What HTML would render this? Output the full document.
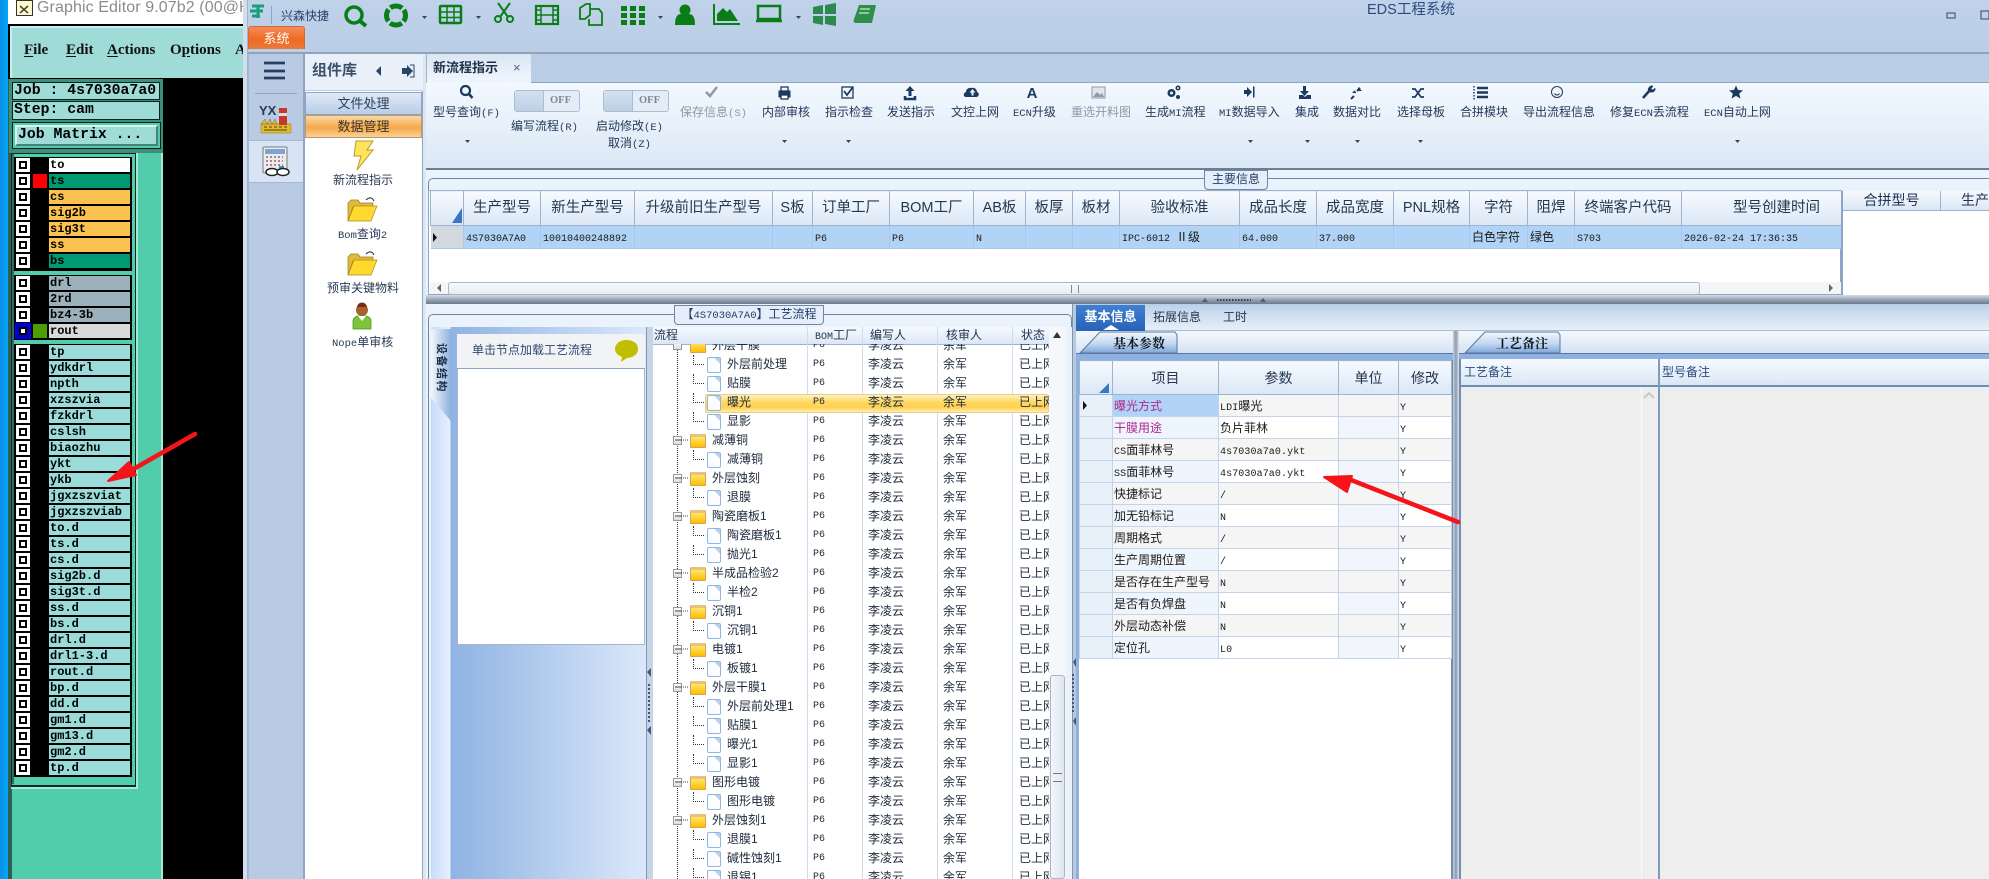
<!DOCTYPE html>
<html><head><meta charset="utf-8"><title>EDS</title>
<style>
html,body{margin:0;padding:0;width:1989px;height:879px;overflow:hidden;background:#bccfe6}
body{position:relative;font:12px/16px "Liberation Sans","Noto Sans CJK SC",sans-serif;color:#1f3350}
div,span.l,svg.o{position:absolute}
i{font:normal 10.5px/1 "Liberation Mono",monospace}
.l{position:absolute;white-space:nowrap;line-height:16px;color:#25395a}
.g{color:#8d99a8}
/* left app */
.lay{position:absolute;left:14px;width:118px;background:#000}
.lay p{margin:0;height:16px;position:relative}
.lay p s{position:absolute;left:2px;top:1px;width:14px;height:14px;background:#fff;text-decoration:none}
.lay p s:after{content:"";position:absolute;left:3px;top:3px;width:4px;height:4px;border:2px solid #000;background:#fff}
.lay p b{position:absolute;left:35px;top:1px;width:81px;height:14px;background:#9bdcdb;color:#000;font:bold 12px/14px "Liberation Mono",monospace;padding-left:1px;box-sizing:border-box;white-space:nowrap;overflow:hidden}
.lay p b.o{background:#fcc24f}.lay p b.v{background:#009a72}.lay p b.y{background:#9cb1bb}.lay p b.w{background:#fff}
.mono{font:bold 14.8px/18px "Liberation Mono",monospace;color:#000;white-space:nowrap}
.mn{position:absolute;top:41px;font:bold 15px/18px "Liberation Serif",serif;color:#111}
.mn u{text-underline-offset:2px}
/* tables */
table{position:absolute;border-collapse:collapse;table-layout:fixed}
td,th{padding:0;overflow:hidden;white-space:nowrap}
.t1 th{height:34px;font:normal 14.5px/16px "Liberation Sans","Noto Sans CJK SC",sans-serif;color:#24364f;background:linear-gradient(#f6faff,#dbe7f5);border:1px solid #9db4d0;text-align:center}
.t1 td{height:22px;background:#b0d3f6;border-right:1px solid #a7c8ea;border-bottom:1px solid #a7c8ea;padding-left:2px;font-size:12px;color:#1a1a1a}
.t2 th{height:33px;font:normal 14px/16px "Liberation Sans","Noto Sans CJK SC",sans-serif;color:#24364f;background:linear-gradient(#f6faff,#dbe7f5);border:1px solid #9db4d0}
.t2 td{height:21px;border:1px solid #c3d4e9;padding-left:1px;font-size:12px;color:#1a1a1a;background:#fff}
.t2 tr:nth-child(even) td{background:#f5f5f5}
.t2 td:first-child{background:#e8f0fa!important}
.t2 td:nth-child(2){background:#eff5fc}
.t2 tr:nth-child(even) td:nth-child(2){background:#f5f5f5}
.t2 td:nth-child(4){background:#f2f6fc}
.t2 td i{font-size:10px;letter-spacing:.1px}
/* tree */
.t{position:absolute;left:653px;top:344px;width:396px;height:535px;overflow:hidden;font-size:12px;color:#1d2a3c}
.in{position:absolute;left:0;top:-8px;width:396px}
.t p{position:relative;height:19px;margin:0;white-space:nowrap}
.t p span{position:absolute;top:0;line-height:19px;left:74px}
.t p.f span:nth-child(1){left:59px}
.t p span:nth-child(2){left:160px;font:10px/19px "Liberation Mono",monospace}
.t p span:nth-child(3){left:215px}
.t p span:nth-child(4){left:290px}
.t p span:nth-child(5){left:366px;width:30px;overflow:hidden}
.t p:before{content:"";position:absolute;left:54px;top:2px;width:12px;height:14px;border:1px solid #8fb6e0;border-radius:2px;background:linear-gradient(225deg,#b9d2ee 4px,#fff 4px,#f6faff)}
.t p:after{content:"";position:absolute;left:40px;top:0;width:10px;height:9px;border-left:1px dotted #333;border-bottom:1px dotted #333}
.t p.f:before{left:37px;top:3px;width:14px;height:10px;border:1px solid #d3a35a;border-top:3px solid #e9c27c;border-radius:1px;background:linear-gradient(#ffe66a,#ffbd00)}
.t p.f:after{left:20px;top:5px;width:7px;height:7px;border:1px solid #999;background:linear-gradient(#fff,#ddd),#fff;box-shadow:inset 0 0 0 0 #000}
.h{font-size:12px;color:#24364f;white-space:nowrap;line-height:17px}
</style></head><body>

<!-- desktop and left app -->
<div style="left:0;top:0;width:8px;height:879px;background:linear-gradient(90deg,#0a8fe6,#05a8f7)"></div>
<div style="left:8px;top:0;width:236px;height:24px;background:#fff"></div>
<div style="left:37px;top:-1px;font:16px/18px 'Liberation Sans',sans-serif;color:#8b8b8b;white-space:nowrap;width:206px;overflow:hidden;letter-spacing:.1px">Graphic Editor 9.07b2 (00@H</div>
<div style="left:16px;top:0;width:15px;height:14px;background:#fff8c8;border:1px solid #333"></div>
<div style="left:8px;top:24px;width:236px;height:855px;background:#000"></div>
<div style="left:10px;top:26px;width:234px;height:52px;background:#9fdcd8;border-top:2px solid #c8f0ec;border-left:2px solid #c8f0ec;box-sizing:border-box"></div>
<span class="mn" style="left:24px"><u>F</u>ile</span>
<span class="mn" style="left:66px"><u>E</u>dit</span>
<span class="mn" style="left:107px"><u>A</u>ctions</span>
<span class="mn" style="left:170px">O<u>p</u>tions</span>
<span class="mn" style="left:235px;width:8px;overflow:hidden">A</span>

<div style="left:8px;top:79px;width:155px;height:800px;background:#52cdac"></div>
<div style="left:8px;top:79px;width:4px;height:800px;background:#2f5f55"></div>
<div style="left:9px;top:79px;width:154px;height:74px;background:#3d8f7c"></div>
<div style="left:12px;top:82px;width:148px;height:18px;background:#9fdcd8;border:1px solid #07231d;box-sizing:border-box"></div>
<div style="left:12px;top:101px;width:148px;height:19px;background:#9fdcd8;border:1px solid #07231d;box-sizing:border-box"></div>
<div class="mono" style="left:14px;top:82px">Job : 4s7030a7a0</div>
<div class="mono" style="left:14px;top:101px">Step: cam</div>
<div style="left:12px;top:122px;width:149px;height:27px;background:#52cdac;border:1px solid #07231d;box-sizing:border-box"></div>
<div style="left:15px;top:125px;width:143px;height:21px;background:#9fdcd8;border-top:2px solid #d6f4f2;border-left:2px solid #d6f4f2;border-right:2px solid #4a807c;border-bottom:2px solid #4a807c;box-sizing:border-box"></div>
<div class="mono" style="left:18px;top:126px">Job Matrix ...</div>

<div style="left:11px;top:153px;width:125px;height:634px;background:#52cdac;border:1px solid #0d2a24;border-bottom:2px solid #0d2a24;box-sizing:border-box"></div>
<div style="left:11px;top:787px;width:126px;height:2px;background:#a5ead7"></div>
<div style="left:136px;top:153px;width:2px;height:636px;background:#a5ead7"></div>
<div style="left:161px;top:153px;width:2px;height:726px;background:#a5ead7"></div>
<div style="left:12px;top:154px;width:2px;height:630px;background:#2f6e5c"></div>

<div class="lay" style="top:157px;height:114px">
<p><s></s><b class="w">to</b></p>
<p><s></s><span style="position:absolute;left:19px;top:1px;width:14px;height:14px;background:#f00"></span><b class="v">ts</b></p>
<p><s></s><b class="o">cs</b></p><p><s></s><b class="o">sig2b</b></p><p><s></s><b class="o">sig3t</b></p><p><s></s><b class="o">ss</b></p><p><s></s><b class="v">bs</b></p>
</div>
<div class="lay" style="top:275px;height:65px">
<p><s></s><b class="y">drl</b></p><p><s></s><b class="y">2rd</b></p><p><s></s><b class="y">bz4-3b</b></p>
<p><s style="box-shadow:0 0 0 1px #00f;background:#00c"></s><span style="position:absolute;left:19px;top:1px;width:14px;height:14px;background:#4aa000"></span><b style="background:#d9d9d9">rout</b></p>
</div>
<div class="lay" style="top:344px;height:433px">
<p><s></s><b>tp</b></p><p><s></s><b>ydkdrl</b></p><p><s></s><b>npth</b></p><p><s></s><b>xzszvia</b></p><p><s></s><b>fzkdrl</b></p><p><s></s><b>cslsh</b></p><p><s></s><b>biaozhu</b></p><p><s></s><b>ykt</b></p><p><s></s><b>ykb</b></p><p><s></s><b>jgxzszviat</b></p><p><s></s><b>jgxzszviab</b></p><p><s></s><b>to.d</b></p><p><s></s><b>ts.d</b></p><p><s></s><b>cs.d</b></p><p><s></s><b>sig2b.d</b></p><p><s></s><b>sig3t.d</b></p><p><s></s><b>ss.d</b></p><p><s></s><b>bs.d</b></p><p><s></s><b>drl.d</b></p><p><s></s><b>drl1-3.d</b></p><p><s></s><b>rout.d</b></p><p><s></s><b>bp.d</b></p><p><s></s><b>dd.d</b></p><p><s></s><b>gm1.d</b></p><p><s></s><b>gm13.d</b></p><p><s></s><b>gm2.d</b></p><p><s></s><b>tp.d</b></p>
</div>

<!-- EDS window -->
<div style="left:243px;top:0;width:1746px;height:879px;background:linear-gradient(#bfd2ea,#b9cde5 60px)"></div>
<div style="left:243px;top:0;width:5px;height:879px;background:#d3deec;border-right:1px solid #9fb4cf;box-sizing:border-box"></div>
<span class="l" style="left:281px;top:8px;color:#24406a">兴森快捷</span>
<div style="left:271px;top:6px;width:1px;height:18px;background:#8ea6c4"></div>
<div style="left:1367px;top:2px;font-size:14.5px;line-height:16px;color:#2c4a7c;white-space:nowrap">EDS工程系统</div>
<div style="left:248px;top:26px;width:57px;height:23px;background:linear-gradient(#f58c5a,#f06a22 55%,#e87a3a);border:1px solid #d0683c;border-bottom:0;border-radius:3px 3px 0 0;box-sizing:border-box;color:#fff;font-size:13px;line-height:23px;text-align:center">系统</div>
<div style="left:248px;top:52px;width:1741px;height:2px;background:#8fa3bd"></div>

<!-- sidebar -->
<div style="left:248px;top:54px;width:55px;height:825px;background:#b8cbe3;border-left:1px solid #a4b9d4;box-sizing:border-box"></div>
<div style="left:255px;top:93px;width:42px;height:1px;background:#8ea6c4"></div>
<div style="left:249px;top:140px;width:54px;height:43px;background:#d8e4f3;border-top:1px solid #a4b9d4;border-bottom:1px solid #a4b9d4;box-sizing:border-box"></div>
<div style="left:303px;top:54px;width:2px;height:825px;background:#8ea6c4"></div>
<div style="left:305px;top:54px;width:121px;height:36px;background:#e9f0f9"></div>
<div style="left:312px;top:62px;font:bold 15px/18px 'Liberation Sans','Noto Sans CJK SC',sans-serif;color:#3b4f6b;white-space:nowrap">组件库</div>
<div style="left:305px;top:91px;width:117px;height:788px;background:#fff;border-right:1px solid #8ea6c4;box-sizing:content-box"></div>
<div style="left:305px;top:92px;width:117px;height:23px;background:linear-gradient(#dfe9f6,#b9cde6);border:1px solid #8ea6c4;box-sizing:border-box;text-align:center;line-height:21px;font-size:13px;color:#2c3f5c">文件处理</div>
<div style="left:305px;top:115px;width:117px;height:23px;background:linear-gradient(#fbd9a4,#f6a84a 55%,#fcd095);border:1px solid #b79a70;box-sizing:border-box;text-align:center;line-height:21px;font-size:13px;color:#3a3324">数据管理</div>
<span class="l" style="left:333px;top:172px;color:#2a3b55">新流程指示</span>
<span class="l" style="left:338px;top:226px;color:#2a3b55"><i>Bom</i>查询<i>2</i></span>
<span class="l" style="left:327px;top:280px;color:#2a3b55">预审关键物料</span>
<span class="l" style="left:332px;top:334px;color:#2a3b55"><i>Nope</i>单审核</span>
<div style="left:423px;top:54px;width:3px;height:825px;background:#dde7f4"></div>

<!-- tab row -->
<div style="left:426px;top:54px;width:1563px;height:28px;background:#b9cde5;border-bottom:1px solid #8ea6c4;box-sizing:content-box"></div>
<div style="left:426px;top:54px;width:105px;height:29px;background:linear-gradient(#dbe6f4,#f0f6fd);border-left:1px solid #9fb4cf;box-sizing:border-box"></div>
<div style="left:433px;top:60px;font:bold 13px/16px 'Liberation Sans','Noto Sans CJK SC',sans-serif;color:#21324a;white-space:nowrap">新流程指示</div>
<div style="left:513px;top:60px;font-size:13px;line-height:16px;color:#54657c">×</div>

<!-- ribbon -->
<div style="left:426px;top:83px;width:1563px;height:85px;background:linear-gradient(#f2f8fe,#dce8f6);border-bottom:2px solid #6f7f93;box-sizing:content-box"></div>
<span class="l" style="left:433px;top:104px">型号查询<i>(F)</i></span>
<div style="left:514px;top:90px;width:66px;height:22px;background:#e4ecf6;border:1px solid #a8bdd6;border-radius:3px;box-sizing:border-box"><div style="left:0;top:0;width:28px;height:20px;background:linear-gradient(#d3e0ef,#bfd0e4);border-right:1px solid #a8bdd6"></div><div style="left:35px;top:2px;font:bold 10.5px/16px 'Liberation Serif',serif;color:#7d8893">OFF</div></div>
<span class="l" style="left:511px;top:118px">编写流程<i>(R)</i></span>
<div style="left:603px;top:90px;width:66px;height:22px;background:#e4ecf6;border:1px solid #a8bdd6;border-radius:3px;box-sizing:border-box"><div style="left:0;top:0;width:28px;height:20px;background:linear-gradient(#d3e0ef,#bfd0e4);border-right:1px solid #a8bdd6"></div><div style="left:35px;top:2px;font:bold 10.5px/16px 'Liberation Serif',serif;color:#7d8893">OFF</div></div>
<span class="l" style="left:596px;top:118px">启动修改<i>(E)</i></span>
<span class="l" style="left:608px;top:135px">取消<i>(Z)</i></span>
<span class="l g" style="left:680px;top:104px">保存信息<i>(S)</i></span>
<span class="l" style="left:762px;top:104px">内部审核</span>
<span class="l" style="left:825px;top:104px">指示检查</span>
<span class="l" style="left:887px;top:104px">发送指示</span>
<span class="l" style="left:951px;top:104px">文控上网</span>
<span class="l" style="left:1013px;top:104px"><i>ECN</i>升级</span>
<span class="l g" style="left:1071px;top:104px">重选开料图</span>
<span class="l" style="left:1145px;top:104px">生成<i>MI</i>流程</span>
<span class="l" style="left:1219px;top:104px"><i>MI</i>数据导入</span>
<span class="l" style="left:1295px;top:104px">集成</span>
<span class="l" style="left:1333px;top:104px">数据对比</span>
<span class="l" style="left:1397px;top:104px">选择母板</span>
<span class="l" style="left:1460px;top:104px">合拼模块</span>
<span class="l" style="left:1523px;top:104px">导出流程信息</span>
<span class="l" style="left:1610px;top:104px">修复<i>ECN</i>丢流程</span>
<span class="l" style="left:1704px;top:104px"><i>ECN</i>自动上网</span>

<!-- main info -->
<div style="left:426px;top:170px;width:1563px;height:134px;background:#eaf2fb"></div>
<div style="left:428px;top:178px;width:1561px;height:20px;border-top:1px solid #6f86a5;border-left:1px solid #6f86a5;border-radius:5px 0 0 0;box-sizing:border-box"></div>
<div style="left:428px;top:190px;width:1413px;height:105px;background:#fff;border:1px solid #8ea6c4;box-sizing:border-box"></div>
<div style="left:1204px;top:170px;width:64px;height:20px;background:#e5eef9;border:1px solid #6f86a5;border-radius:0 0 4px 4px;box-sizing:border-box;text-align:center;font-size:12px;line-height:17px;color:#24406a">主要信息</div>
<table class="t1" style="left:430px;top:190px;width:1411px">
<colgroup><col style="width:33px"><col style="width:77px"><col style="width:94px"><col style="width:138px"><col style="width:40px"><col style="width:77px"><col style="width:84px"><col style="width:52px"><col style="width:47px"><col style="width:47px"><col style="width:120px"><col style="width:77px"><col style="width:77px"><col style="width:76px"><col style="width:58px"><col style="width:47px"><col style="width:107px"><col style="width:160px"></colgroup>
<tr><th></th><th>生产型号</th><th>新生产型号</th><th>升级前旧生产型号</th><th>S板</th><th>订单工厂</th><th>BOM工厂</th><th>AB板</th><th>板厚</th><th>板材</th><th>验收标准</th><th>成品长度</th><th>成品宽度</th><th>PNL规格</th><th>字符</th><th>阻焊</th><th>终端客户代码</th><th style="padding-left:30px">型号创建时间</th></tr>
<tr><td style="background:#d3d8de"></td><td><i style="font-size:10px">4S7030A7A0</i></td><td><i style="font-size:10px">10010400248892</i></td><td></td><td></td><td><i style="font-size:10px">P6</i></td><td><i style="font-size:10px">P6</i></td><td><i style="font-size:10px">N</i></td><td></td><td></td><td><i style="font-size:10px">IPC-6012 </i>Ⅱ级</td><td><i style="font-size:10px">64.000</i></td><td><i style="font-size:10px">37.000</i></td><td></td><td>白色字符</td><td>绿色</td><td><i style="font-size:10px">S703</i></td><td><i style="font-size:10px">2026-02-24 17:36:35</i></td></tr>
</table>
<div style="left:430px;top:282px;width:1411px;height:12px;background:#f3f5f8"></div>
<div style="left:448px;top:282px;width:1252px;height:13px;background:linear-gradient(#f8fafc,#e8edf3);border:1px solid #aab6c4;border-radius:3px;box-sizing:border-box"></div>
<div style="left:1071px;top:285px;width:6px;height:8px;border-left:1px solid #888;border-right:1px solid #888"></div>
<div style="left:1841px;top:191px;width:148px;height:104px;background:#fff;border-left:2px solid #8ea6c4;box-sizing:border-box"></div>
<div style="left:1843px;top:191px;width:98px;height:20px;background:linear-gradient(#f6faff,#dbe7f5);border-right:1px solid #9db4d0;border-bottom:1px solid #9db4d0;box-sizing:border-box;text-align:center;font-size:14px;line-height:19px;white-space:nowrap">合拼型号</div>
<div style="left:1941px;top:191px;width:48px;height:20px;background:linear-gradient(#f6faff,#dbe7f5);border-bottom:1px solid #9db4d0;box-sizing:border-box;font-size:14px;line-height:19px;padding-left:20px;white-space:nowrap;overflow:hidden">生产</div>
<div style="left:426px;top:295px;width:1563px;height:9px;background:linear-gradient(#d5dde7,#8e9cae 60%,#6d7b8e)"></div>

<!-- lower left -->
<div style="left:426px;top:304px;width:647px;height:575px;background:#eaf2fb"></div>
<div style="left:428px;top:314px;width:644px;height:565px;border-top:1px solid #6f86a5;border-left:1px solid #6f86a5;border-right:1px solid #6f86a5;border-radius:5px 5px 0 0;box-sizing:border-box"></div>
<div style="left:674px;top:305px;width:150px;height:20px;background:#e5eef9;border:1px solid #6f86a5;border-radius:0 0 4px 4px;box-sizing:border-box;text-align:center;font-size:12px;line-height:17px;color:#24406a;white-space:nowrap">【<i>4S7030A7A0</i>】工艺流程</div>
<div style="left:431px;top:327px;width:215px;height:552px;background:linear-gradient(90deg,#c8dcf8,#e6f0fd 19px,#8fb3e3 20px,#dbe8fa)"></div>
<div style="left:431px;top:329px;width:20px;height:92px;background:linear-gradient(90deg,#f3f7fd,#8fb1df);clip-path:polygon(0 0,100% 0,100% 100%,0 75%)"></div>
<div style="left:433px;top:343px;writing-mode:vertical-rl;text-orientation:sideways;font:bold 11px/16px 'Liberation Sans','Noto Sans CJK SC',sans-serif;letter-spacing:1.500px;color:#20304a;white-space:nowrap">设备结构</div>
<div style="left:457px;top:343px;width:188px;height:302px;background:#fff;border:1px solid #a5b6cc;border-top:0;box-sizing:border-box"></div>
<div style="left:457px;top:334px;width:188px;height:35px;background:#f2f3f5;border-bottom:1px solid #8ea6c4;box-sizing:border-box"></div>
<span class="l" style="left:472px;top:342px;color:#2d4770">单击节点加载工艺流程</span>
<div style="left:646px;top:327px;width:7px;height:552px;background:#c6d4e6;border-left:1px solid #7f97b5;box-sizing:border-box"></div>

<!-- tree -->
<div style="left:653px;top:327px;width:413px;height:552px;background:#fff"></div>
<div style="left:653px;top:327px;width:413px;height:18px;background:linear-gradient(#f6faff,#dbe7f5);border-bottom:1px solid #9db4d0;box-sizing:border-box"></div>
<div class="h" style="left:654px;top:327px">流程</div>
<div class="h" style="left:815px;top:327px"><i style="font-size:10px">BOM</i>工厂</div>
<div class="h" style="left:870px;top:327px">编写人</div>
<div class="h" style="left:946px;top:327px">核审人</div>
<div class="h" style="left:1021px;top:327px">状态</div>
<div style="left:807px;top:327px;width:1px;height:552px;background:#cfdcec"></div>
<div style="left:862px;top:327px;width:1px;height:552px;background:#cfdcec"></div>
<div style="left:937px;top:327px;width:1px;height:552px;background:#cfdcec"></div>
<div style="left:1012px;top:327px;width:1px;height:552px;background:#cfdcec"></div>
<div style="left:1049px;top:327px;width:17px;height:552px;background:#f4f7fb"></div>
<div style="left:1050px;top:675px;width:15px;height:204px;background:linear-gradient(90deg,#f3f6fa,#dfe6ef);border:1px solid #aab6c4;border-radius:3px;box-sizing:border-box"></div>
<div style="left:1053px;top:773px;width:9px;height:7px;border-top:1px solid #777;border-bottom:1px solid #777"></div>
<div style="left:705px;top:394px;width:344px;height:19px;background:linear-gradient(#fff2bf,#ffd65d 45%,#ffd255 75%,#ffeeb0);border:1px solid #e6cf8e;box-sizing:border-box;border-radius:2px"></div>
<div style="left:677px;top:344px;width:1px;height:535px;border-left:1px dotted #333"></div>
<div class="t"><div class="in">
<p class="f"><span>外层干膜</span><span>P6</span><span>李凌云</span><span>余军</span><span>已上网</span></p>
<p><span>外层前处理</span><span>P6</span><span>李凌云</span><span>余军</span><span>已上网</span></p>
<p><span>贴膜</span><span>P6</span><span>李凌云</span><span>余军</span><span>已上网</span></p>
<p><span>曝光</span><span>P6</span><span>李凌云</span><span>余军</span><span>已上网</span></p>
<p><span>显影</span><span>P6</span><span>李凌云</span><span>余军</span><span>已上网</span></p>
<p class="f"><span>减薄铜</span><span>P6</span><span>李凌云</span><span>余军</span><span>已上网</span></p>
<p><span>减薄铜</span><span>P6</span><span>李凌云</span><span>余军</span><span>已上网</span></p>
<p class="f"><span>外层蚀刻</span><span>P6</span><span>李凌云</span><span>余军</span><span>已上网</span></p>
<p><span>退膜</span><span>P6</span><span>李凌云</span><span>余军</span><span>已上网</span></p>
<p class="f"><span>陶瓷磨板1</span><span>P6</span><span>李凌云</span><span>余军</span><span>已上网</span></p>
<p><span>陶瓷磨板1</span><span>P6</span><span>李凌云</span><span>余军</span><span>已上网</span></p>
<p><span>抛光1</span><span>P6</span><span>李凌云</span><span>余军</span><span>已上网</span></p>
<p class="f"><span>半成品检验2</span><span>P6</span><span>李凌云</span><span>余军</span><span>已上网</span></p>
<p><span>半检2</span><span>P6</span><span>李凌云</span><span>余军</span><span>已上网</span></p>
<p class="f"><span>沉铜1</span><span>P6</span><span>李凌云</span><span>余军</span><span>已上网</span></p>
<p><span>沉铜1</span><span>P6</span><span>李凌云</span><span>余军</span><span>已上网</span></p>
<p class="f"><span>电镀1</span><span>P6</span><span>李凌云</span><span>余军</span><span>已上网</span></p>
<p><span>板镀1</span><span>P6</span><span>李凌云</span><span>余军</span><span>已上网</span></p>
<p class="f"><span>外层干膜1</span><span>P6</span><span>李凌云</span><span>余军</span><span>已上网</span></p>
<p><span>外层前处理1</span><span>P6</span><span>李凌云</span><span>余军</span><span>已上网</span></p>
<p><span>贴膜1</span><span>P6</span><span>李凌云</span><span>余军</span><span>已上网</span></p>
<p><span>曝光1</span><span>P6</span><span>李凌云</span><span>余军</span><span>已上网</span></p>
<p><span>显影1</span><span>P6</span><span>李凌云</span><span>余军</span><span>已上网</span></p>
<p class="f"><span>图形电镀</span><span>P6</span><span>李凌云</span><span>余军</span><span>已上网</span></p>
<p><span>图形电镀</span><span>P6</span><span>李凌云</span><span>余军</span><span>已上网</span></p>
<p class="f"><span>外层蚀刻1</span><span>P6</span><span>李凌云</span><span>余军</span><span>已上网</span></p>
<p><span>退膜1</span><span>P6</span><span>李凌云</span><span>余军</span><span>已上网</span></p>
<p><span>碱性蚀刻1</span><span>P6</span><span>李凌云</span><span>余军</span><span>已上网</span></p>
<p><span>退锡1</span><span>P6</span><span>李凌云</span><span>余军</span><span>已上网</span></p>
</div></div>
<div style="left:1066px;top:327px;width:7px;height:552px;background:#eaf2fb"></div>
<div style="left:1072px;top:304px;width:4px;height:575px;background:#b9c9dc;border-left:1px solid #7f97b5;box-sizing:border-box"></div>

<!-- lower right -->
<div style="left:1076px;top:305px;width:913px;height:26px;background:linear-gradient(#bcd2ea,#e6eff8);border-bottom:1px solid #a9bcd3;box-sizing:border-box"></div>
<div style="left:1076px;top:305px;width:69px;height:26px;background:linear-gradient(#3f7fd0,#2763b8);text-align:center;font:bold 13px/24px 'Liberation Sans','Noto Sans CJK SC',sans-serif;color:#fff">基本信息</div>
<div style="left:1153px;top:308px;font-size:12px;line-height:18px;color:#24364f">拓展信息</div>
<div style="left:1223px;top:308px;font-size:12px;line-height:18px;color:#24364f">工时</div>
<div style="left:1076px;top:331px;width:377px;height:548px;background:#fff"></div>
<div style="left:1076px;top:331px;width:377px;height:22px;background:linear-gradient(#f4f8fd,#d5e3f4)"></div>
<div style="left:1076px;top:353px;width:377px;height:7px;background:#8fb1df;border-top:1px solid #5a78a2;box-sizing:border-box"></div>
<div style="left:1076px;top:360px;width:3px;height:519px;background:#8fb1df"></div>
<div style="left:1451px;top:360px;width:2px;height:519px;background:#6f8db5"></div>
<table class="t2" style="left:1079px;top:360px;width:372px">
<colgroup><col style="width:33px"><col style="width:106px"><col style="width:120px"><col style="width:60px"><col style="width:53px"></colgroup>
<tr><th></th><th>项目</th><th>参数</th><th>单位</th><th>修改</th></tr>
<tr><td></td><td style="background:#b0d3f6;color:#b0278f">曝光方式</td><td><i>LDI</i>曝光</td><td></td><td><i>Y</i></td></tr>
<tr><td></td><td style="color:#b0278f">干膜用途</td><td>负片菲林</td><td></td><td><i>Y</i></td></tr>
<tr><td></td><td><i>CS</i>面菲林号</td><td><i>4s7030a7a0.ykt</i></td><td></td><td><i>Y</i></td></tr>
<tr><td></td><td><i>SS</i>面菲林号</td><td><i>4s7030a7a0.ykt</i></td><td></td><td><i>Y</i></td></tr>
<tr><td></td><td>快捷标记</td><td><i>/</i></td><td></td><td><i>Y</i></td></tr>
<tr><td></td><td>加无铅标记</td><td><i>N</i></td><td></td><td><i>Y</i></td></tr>
<tr><td></td><td>周期格式</td><td><i>/</i></td><td></td><td><i>Y</i></td></tr>
<tr><td></td><td>生产周期位置</td><td><i>/</i></td><td></td><td><i>Y</i></td></tr>
<tr><td></td><td>是否存在生产型号</td><td><i>N</i></td><td></td><td><i>Y</i></td></tr>
<tr><td></td><td>是否有负焊盘</td><td><i>N</i></td><td></td><td><i>Y</i></td></tr>
<tr><td></td><td>外层动态补偿</td><td><i>N</i></td><td></td><td><i>Y</i></td></tr>
<tr><td></td><td>定位孔</td><td><i>L0</i></td><td></td><td><i>Y</i></td></tr>
</table>
<div style="left:1453px;top:331px;width:6px;height:548px;background:linear-gradient(90deg,#c5ced9,#8e9cae,#dfe5ec)"></div>
<div style="left:1459px;top:331px;width:530px;height:22px;background:linear-gradient(#f4f8fd,#d5e3f4)"></div>
<div style="left:1459px;top:353px;width:530px;height:6px;background:#8fb1df;border-top:1px solid #5a78a2;box-sizing:border-box"></div>
<div style="left:1461px;top:359px;width:528px;height:26px;background:linear-gradient(#f6faff,#dbe7f5);border-bottom:2px solid #6f8db5;box-sizing:content-box"></div>
<div style="left:1464px;top:364px;font-size:12px;line-height:16px;color:#2c4a7c">工艺备注</div>
<div style="left:1662px;top:364px;font-size:12px;line-height:16px;color:#2c4a7c">型号备注</div>
<div style="left:1461px;top:387px;width:528px;height:492px;background:#eeeeee"></div>
<div style="left:1459px;top:359px;width:2px;height:520px;background:#6f8db5"></div>
<div style="left:1658px;top:359px;width:2px;height:520px;background:#7f9bbf"></div>
<div style="left:1641px;top:387px;width:1px;height:492px;background:#fafafa"></div>

<!-- icons + arrows overlay -->
<svg class="o" style="left:0;top:0" width="1989" height="879" viewBox="0 0 1989 879">
<defs><linearGradient id="tb" x1="0" y1="0" x2="0" y2="1"><stop offset="0" stop-color="#f2f7fd"/><stop offset=".55" stop-color="#c3d7f0"/><stop offset="1" stop-color="#7fa6da"/></linearGradient></defs>
<!-- doc icon title -->
<path d="M20 6l8 7M28 6l-8 7" stroke="#444" stroke-width="1.5"/>
<!-- logo -->
<g fill="none" stroke="#1a9d78" stroke-width="3"><path d="M252 6h12M250 11h13M252 16h8M258 6v12"/></g>
<!-- green toolbar -->
<g fill="none" stroke="#0b7d16">
<circle cx="354" cy="15" r="8" stroke-width="3.5"/><path d="M360 21l6 5" stroke-width="4"/>
<circle cx="396" cy="15.500" r="9.500" stroke-width="5"/><circle cx="396" cy="15.500" r="9.500" stroke="#bfd2ea" stroke-width="6" stroke-dasharray="2.500 12.420" stroke-dashoffset="-6.200"/>
<rect x="440" y="6" width="21" height="17" rx="1" stroke-width="2.500"/><path d="M440 12h21M440 17.500h21M447 6v17M454 6v17" stroke-width="1.500"/>
<circle cx="498" cy="19" r="3" stroke-width="2"/><circle cx="510" cy="19" r="3" stroke-width="2"/><path d="M500 17l10-14M508 17l-10-14" stroke-width="2"/>
<rect x="536" y="6" width="22" height="18" stroke-width="2.200"/><path d="M541 6v18M553 6v18M536 15h22M536 10h5M536 20h5M553 10h5M553 20h5" stroke-width="1.500"/>
<path d="M580 8l6-4h4v11l-5 4h-5zM590 9h9l3 4v12h-13v-6" stroke-width="1.800"/>
<path d="M758 6h22v13h-22zM756 21h26" stroke-width="2.500"/>
</g>
<g fill="#0b7d16">
<path d="M621 6h6v5h-6zM630 6h6v5h-6zM639 6h6v5h-6zM621 13h6v5h-6zM630 13h6v5h-6zM639 13h6v5h-6zM621 20h6v5h-6zM630 20h6v5h-6zM639 20h6v5h-6z"/>
<circle cx="685" cy="10" r="5.500"/><path d="M675 25c0-9 3-11 6-11h8c3 0 6 2 6 11z"/>
<path d="M713 4h2v19h25v2h-27z"/><path d="M717 21v-7l6-6 4 4 3-3 8 12z"/>
</g>
<path d="M813 7l10-2v9h-10zM825 5l11-2v11h-11zM813 16h10v9l-10-2zM825 16h11v10l-11-2z" fill="#2a8a50"/>
<path d="M859 5h17l-4 18h-16c-2 0-3-1-2-4z" fill="#2f8f4a"/><path d="M860 9h10M859 13h10" stroke="#cde6d4" stroke-width="1.300"/>
<g fill="#33466a"><path d="M422 16h5l-2.500 3zM476 16h5l-2.500 3zM658 16h5l-2.500 3zM796 16h5l-2.500 3z"/>
<path d="M465 140h5l-2.500 3zM782 140h5l-2.500 3zM846 140h5l-2.500 3zM1248 140h5l-2.500 3zM1305 140h5l-2.500 3zM1355 140h5l-2.500 3zM1418 140h5l-2.500 3zM1735 140h5l-2.500 3z"/></g>
<path d="M1947 13h8v5h-8zM1981 11h8v8h-8z" fill="none" stroke="#33466a" stroke-width="1"/>
<!-- sidebar icons -->
<path d="M264 63h21M264 71h21M264 78h21" stroke="#243f62" stroke-width="2.800"/>
<g fill="#2a4566"><path d="M376 71l5-5v10z"/><path d="M402 68h5v-3l6 6-6 6v-3h-5z"/></g><path d="M410 65h4v12h-4" fill="none" stroke="#2a4566"/>
<text x="259" y="115" font-family="Liberation Sans,sans-serif" font-size="13" font-weight="bold" fill="#2a3a5a">YX</text>
<g><rect x="261" y="124" width="30" height="9" fill="#e8b820" stroke="#8a7a30" stroke-width=".5"/><path d="M261 124l4-5 2 5 3-5 2 5 3-5 2 5z" fill="#e8b820" stroke="#666" stroke-width=".5"/><rect x="279" y="108" width="8" height="17" fill="#c33a2a"/><rect x="279" y="113" width="8" height="3" fill="#ddd"/><path d="M264 127h3M269 127h3M274 127h3M279 127h3M284 127h3M264 130h23" stroke="#444" stroke-width="1"/></g>
<g><rect x="263" y="147" width="24" height="26" rx="1" fill="#e8edf2" stroke="#777"/><rect x="265" y="149" width="20" height="5" fill="#7ea5d0"/><path d="M266 157h17M266 161h17M266 165h17" stroke="#b05a5a" stroke-width="1.500" stroke-dasharray="2 2"/><rect x="279" y="166" width="5" height="4" fill="#2a8fd0"/><ellipse cx="272" cy="172" rx="6" ry="3.500" fill="#fff" stroke="#222" stroke-width="1.500"/><ellipse cx="283" cy="172" rx="6" ry="3.500" fill="#fff" stroke="#222" stroke-width="1.500"/></g>
<path d="M356 141h17l-6 9h6l-16 20 4-14h-7z" fill="#ffe35a" stroke="#b79a30"/>
<g><path d="M348 221v-18l3-3h7l2 3h13v4h-20l-5 14z" fill="#e3b93a" stroke="#9c7d20" stroke-width=".7"/><path d="M348 221l6-15h23l-6 15z" fill="#ffd92e" stroke="#a98a20" stroke-width=".7"/><path d="M366 200c3-3 6-3 8 1" fill="none" stroke="#222"/></g>
<g transform="translate(0,54)"><path d="M348 221v-18l3-3h7l2 3h13v4h-20l-5 14z" fill="#e3b93a" stroke="#9c7d20" stroke-width=".7"/><path d="M348 221l6-15h23l-6 15z" fill="#ffd92e" stroke="#a98a20" stroke-width=".7"/><path d="M366 200c3-3 6-3 8 1" fill="none" stroke="#222"/></g>
<circle cx="362" cy="310" r="6" fill="#a8602c"/><path d="M357 307c1-6 9-6 10 0z" fill="#7a2a18"/><path d="M353 329v-8c0-3 3-5 5-5h8c2 0 5 2 5 5v8z" fill="#7cc53a" stroke="#4a8a20" stroke-width=".7"/><path d="M358 316l4 5 4-5z" fill="#fff"/>
<!-- ribbon icons -->
<g fill="none" stroke="#1c3a5e">
<circle cx="465.500" cy="90.500" r="4.500" stroke-width="2.200"/><path d="M469 94l3.500 4" stroke-width="2.500"/>
<rect x="779" y="91" width="11" height="6" fill="#1c3a5e"/><rect x="781" y="87" width="7" height="4" stroke-width="1.300"/><rect x="781" y="95" width="7" height="4" fill="#fff" stroke-width="1.300"/>
<rect x="842" y="87" width="11" height="11" stroke-width="1.300"/><path d="M844 91l3 4 6-8" stroke-width="1.800"/>
<path d="M905 96v3h10v-3" stroke-width="2.500"/>
<path d="M1354 96l-3 3M1357 91l3-3" stroke-width="2"/>
<path d="M1412 89h3l6 8h3M1412 97h3l6-8h3" stroke-width="1.700"/>
<path d="M1477 88h11M1477 92.500h11M1477 97h11" stroke-width="2.500"/><path d="M1474 86v14" stroke-width="1.500" stroke-dasharray="1.500 1.500"/>
<circle cx="1557" cy="92" r="5.500" stroke-width="1"/><path d="M1554.500 93.500c1 2 4 2 5 0" stroke-width="1"/>
<path d="M1643 98l7-8" stroke-width="2.500"/><path d="M1648 90c0-3 3-5 5-4l-2 3 2 1 2-2c1 3-2 5-5 4" fill="#1c3a5e" stroke-width=".5"/>
</g>
<g fill="#1c3a5e">
<path d="M910 86l4.500 5h-3v5h-3v-5h-3z"/>
<path d="M966 97c-3 0-3-4 0-5 0-3 3-5 6-4 2-1 5 1 5 4 3 1 2 5-1 5z"/>
<path d="M1244 90h3v-3l5 5-5 5v-3h-3z"/><path d="M1253 87h1v10h-1" stroke="#1c3a5e"/>
<path d="M1303 86h3v5h3l-4.500 5-4.500-5h3z"/><path d="M1299 95h4l2 2 2-2h4v4h-12z"/>
<path d="M1356 93h-4l1.500-1.500 1-1 1.500 1.500zM1358 91v-4l4 4z"/>
<path d="M1736 85.500l2 4.500 5 .4-3.800 3.200 1.200 4.900-4.400-2.600-4.400 2.600 1.200-4.900-3.800-3.200 5-.4z"/>
<circle cx="1171.500" cy="93" r="4"/><circle cx="1178" cy="88" r="2.500"/><circle cx="1178" cy="97" r="2"/>
</g>
<circle cx="1171.500" cy="93" r="1.500" fill="#e8f0fa"/><circle cx="1178" cy="88" r="1" fill="#e8f0fa"/>
<path d="M972.500 89l3 3.500h-2v3h-2v-3h-2z" fill="#eef4fb"/>
<text x="1032" y="98" text-anchor="middle" font-family="Liberation Sans,sans-serif" font-size="15" font-weight="bold" fill="#1c3a5e">A</text>
<path d="M706 92l4 4 7-9" fill="none" stroke="#8d99a8" stroke-width="2.500"/>
<rect x="1092" y="87" width="13" height="11" fill="#dfe6ee" stroke="#8d99a8"/><path d="M1093 97l4-5 3 3 2-2 2 4z" fill="#8d99a8"/>
<!-- main table marks -->
<path d="M462 223v-15l-10 15z" fill="#3a76c8"/><path d="M433 233v9l4-4.500z" fill="#111"/>
<path d="M441 284v8l-4-4z" fill="#666"/><path d="M1829 284v8l4-4z" fill="#666"/>
<g fill="#4b5d7a"><path d="M1202 302l3-4 3 4zM1260 302l3-4 3 4z"/></g><path d="M1217 300h34" stroke="#2f3d54" stroke-width="2" stroke-dasharray="1.500 1.500"/>
<!-- bubble -->
<path d="M626 340c8 0 12 4 12 9 0 6-6 9-11 9l-6 4 1-5c-4-2-7-4-7-8 0-5 5-9 11-9z" fill="#bfbf00"/>
<!-- tab shapes -->
<path d="M1080 353l20-21h75l2 3v18z" fill="url(#tb)" stroke="#5a78a2"/>
<path d="M1465 353l20-21h73l2 3v18z" fill="url(#tb)" stroke="#5a78a2"/>
<text x="1113" y="348" font-family="Liberation Serif,Noto Serif CJK SC,serif" font-size="13" font-weight="bold" fill="#101820">基本参数</text>
<text x="1496" y="348" font-family="Liberation Serif,Noto Serif CJK SC,serif" font-size="13" font-weight="bold" fill="#101820">工艺备注</text>
<path d="M1103 330l8-5 8 5z" fill="#fff"/>
<path d="M1109 393v-10l-10 10z" fill="#3a76c8"/><path d="M1083 401v9l4-4.500z" fill="#111"/>
<path d="M1644 398l5-5 5 5" fill="none" stroke="#c8c8c8" stroke-width="2"/>
<!-- tree scroll -->
<path d="M1053 338l4-6 4 6z" fill="#333"/>
<g fill="#3f5980"><path d="M647 672l4-4v9zM647 730l4-4v9zM1073 662l3-4v9zM1073 721l3-4v9z"/></g>
<path d="M649 684v38M1073 674v38" stroke="#3f5980" stroke-width="2" stroke-dasharray="2 2"/>
<!-- tree row minus -->
<g stroke="#444"><path d="M675 440h7M675 478h7M675 516h7M675 573h7M675 611h7M675 649h7M675 687h7M675 782h7M675 820h7"/></g>
<g stroke="#444" stroke-dasharray="1 1"><path d="M683 440h6M683 478h6M683 516h6M683 573h6M683 611h6M683 649h6M683 687h6M683 782h6M683 820h6"/></g>
<!-- red arrows -->
<g fill="#f5141a" stroke="#f5141a" stroke-linejoin="round" stroke-linecap="round">
<path d="M195 434l-65 37" stroke-width="4.500" fill="none"/>
<path d="M108 481l21-19 7 13z" stroke-width="2"/>
<path d="M1458 522l-112-44" stroke-width="4.500" fill="none"/>
<path d="M1324 477l28-1-5 16z" stroke-width="2"/>
</g>
</svg>
</body></html>
